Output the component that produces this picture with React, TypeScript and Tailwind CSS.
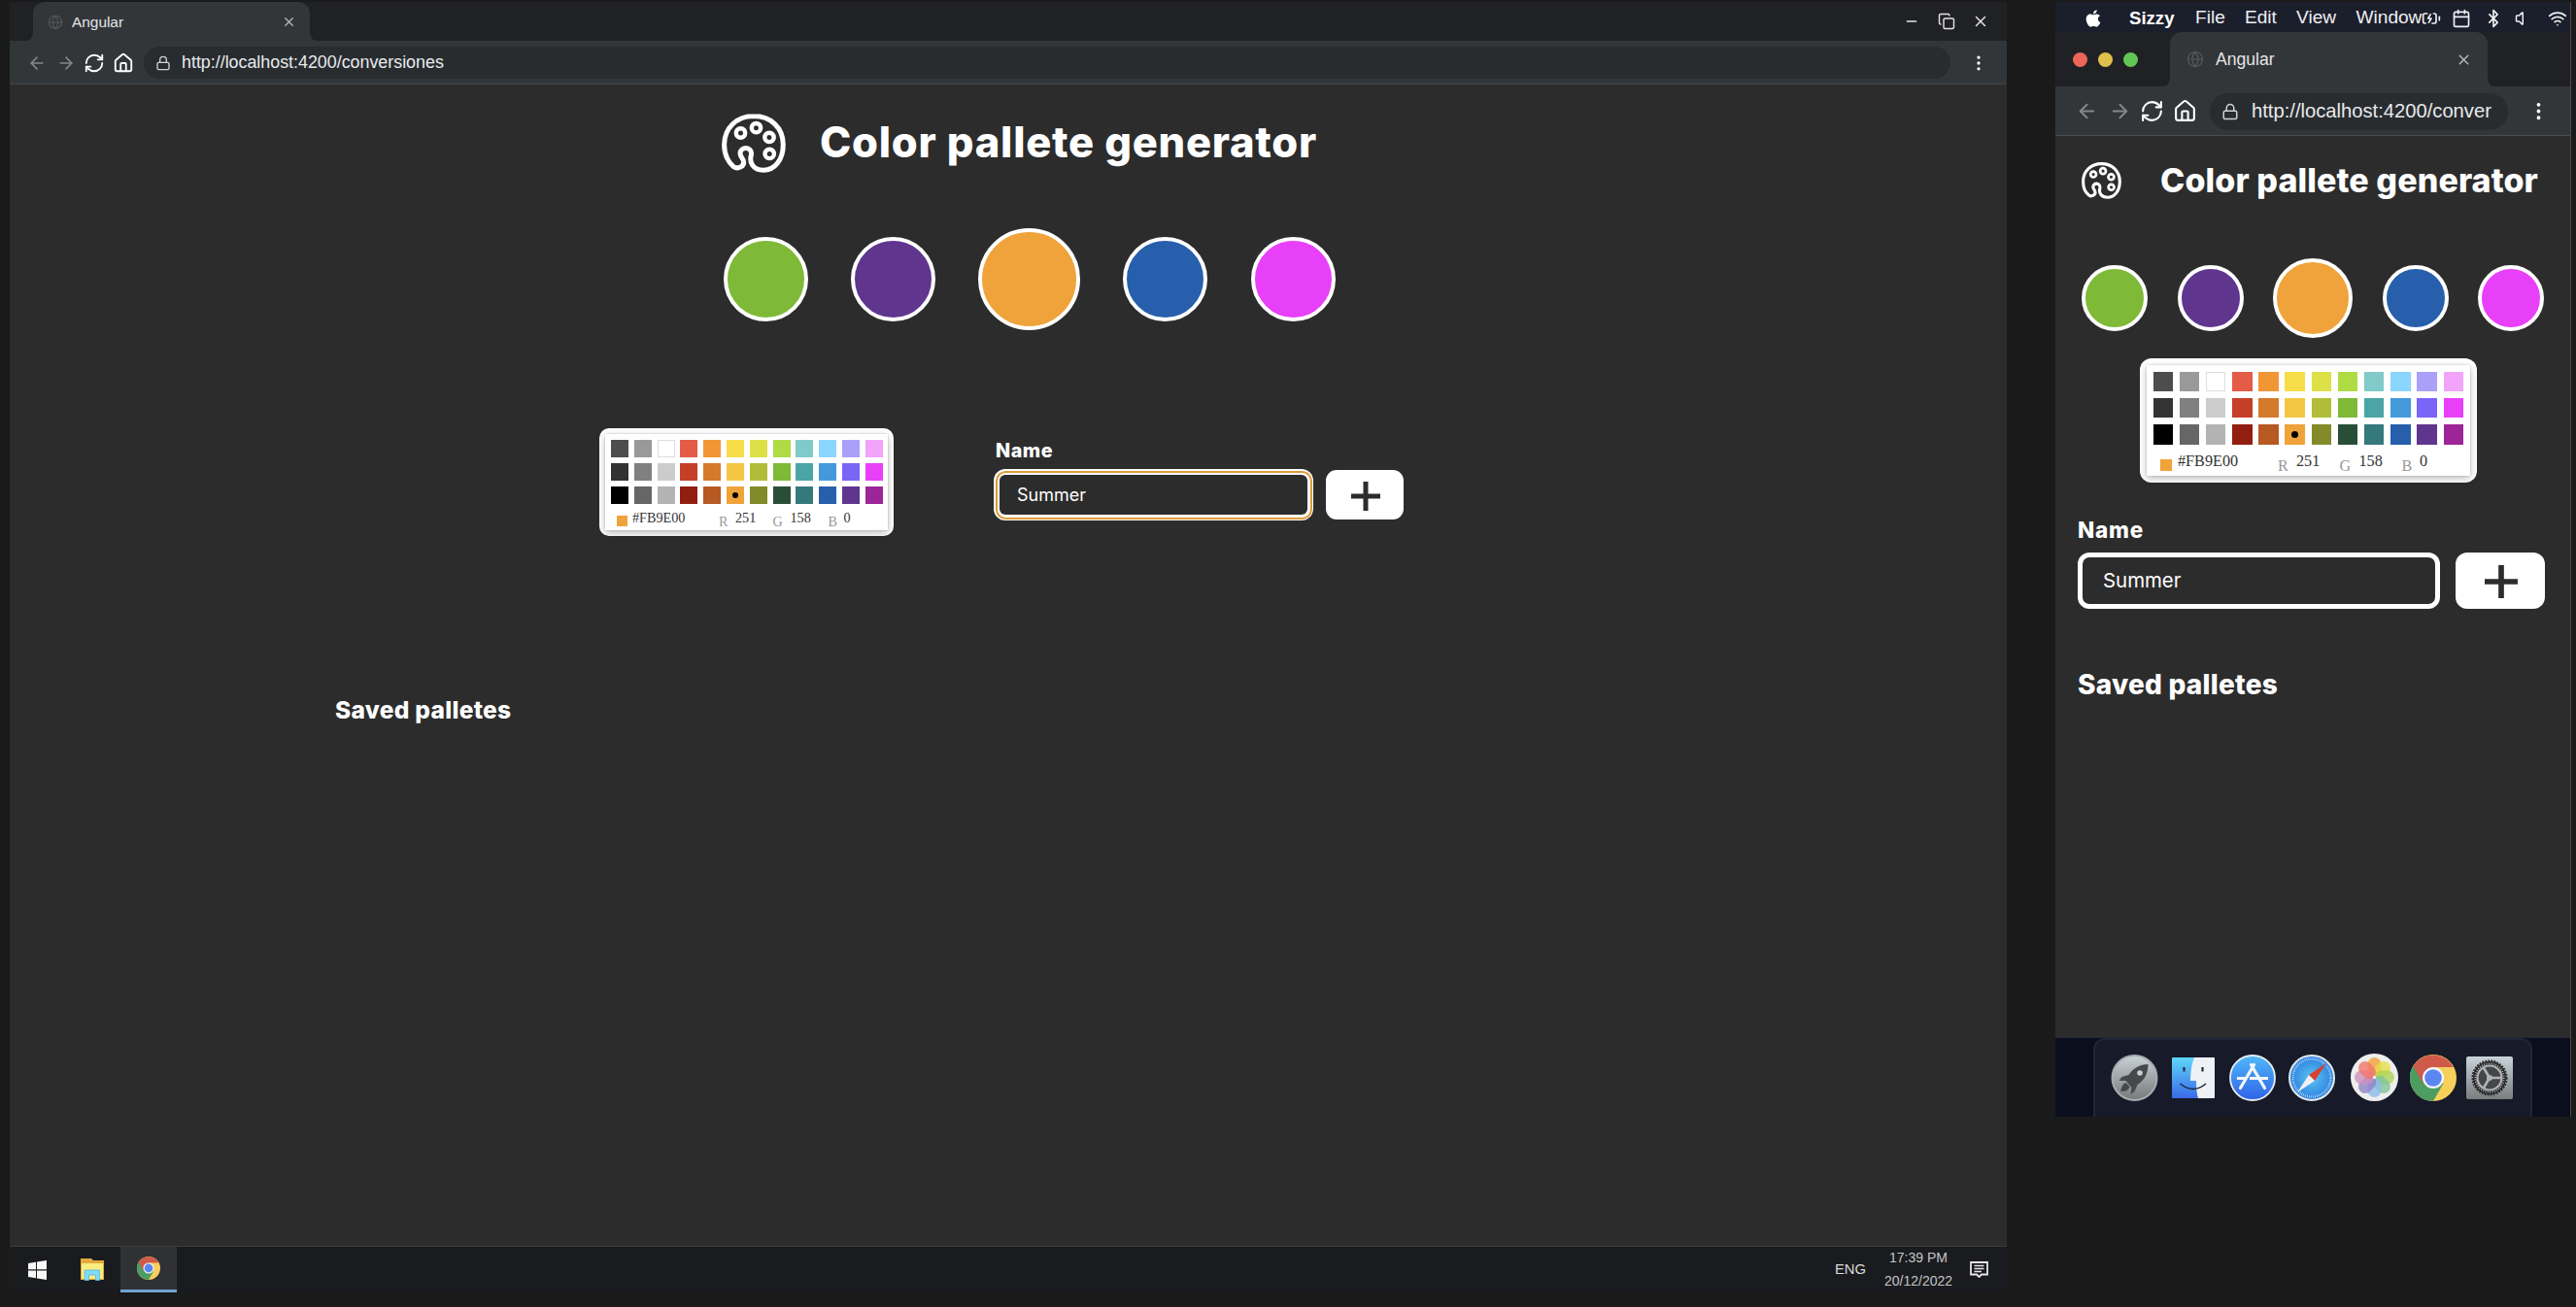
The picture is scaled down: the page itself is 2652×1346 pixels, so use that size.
import React from "react";
import {
  ArrowLeft, ArrowRight, RefreshCw, House, Lock, Globe, X, Minus, Copy,
  EllipsisVertical, Calendar, Bluetooth, Volume, Wifi, BatteryCharging,
} from "lucide-react";
import { FaApple } from "react-icons/fa";

type Mode = "desktop" | "mobile";

const SWATCHES = [
  ["#4d4d4d", "#999999", "#ffffff", "#e45b47", "#f19635", "#f7dd49", "#dde046", "#afdb45", "#80cac9", "#8bd6fe", "#aaa0f9", "#f2a3fa"],
  ["#333333", "#808080", "#cccccc", "#c43f27", "#d47a2b", "#f3c744", "#b1bd39", "#7eba37", "#4ba4a5", "#4499db", "#7965f6", "#e83ff9"],
  ["#000000", "#666666", "#b3b3b3", "#921e12", "#b75923", "#f0a33a", "#828a29", "#294e38", "#35797d", "#275fac", "#5f358e", "#9c2597"],
];

function PaletteIcon({ className }: { className: string }) {
  return (
    <svg className={className} viewBox="0 0 66 61" preserveAspectRatio="none" fill="none" stroke="white">
      <path
        strokeWidth="5"
        strokeLinejoin="round"
        d="M33 2.6C15 2.6 2.6 15 2.6 32C2.6 43 7.500 51 12 54.500C17 58 23.500 54 22.500 49C22 46 19 44.500 19 41C19 37.500 22 35.500 25 35.500C28 35.500 31 38 30.500 42C28 50 32 58.2 43 58.2C55 58.2 63.3 47 63.3 32C63.3 14 50 2.6 33 2.6Z"
      />
      <g strokeWidth="4.4">
        <circle cx="19.500" cy="20" r="4.700" />
        <circle cx="35.500" cy="14.700" r="4.700" />
        <circle cx="49" cy="24.400" r="4.700" />
        <circle cx="49.200" cy="41.400" r="4.700" />
      </g>
    </svg>
  );
}

function ChromeIcon({ className }: { className: string }) {
  return (
    <svg className={className} viewBox="0 0 48 48">
      <circle cx="24" cy="24" r="24" fill="#f7d05c" />
      <path d="M24 24L3.2 12A24 24 0 0 0 24 48L34.4 30Z" fill="#4d9d61" />
      <path d="M24 24L3.2 12A24 24 0 0 1 44.8 13L24 13Z" fill="#cf5a4a" />
      <path d="M3.2 12L13.6 30L24 13Z" fill="#cf5a4a" />
      <path d="M3.2 12A24 24 0 0 0 0 24L13.6 30Z" fill="#4d9d61" />
      <circle cx="24" cy="24" r="11" fill="#f4f6fb" />
      <circle cx="24" cy="24" r="8.8" fill="#5b86ef" />
    </svg>
  );
}

function PlusIcon({ className }: { className: string }) {
  return (
    <svg className={className} viewBox="0 0 30 30">
      <path d="M15 0V30M0 15H30" stroke="#2c2c2c" strokeWidth="5" />
    </svg>
  );
}

function TabCurve({ flip = false }: { flip?: boolean }) {
  return (
    <svg className="h-2.5 w-2 self-end" viewBox="0 0 8 10" preserveAspectRatio="none">
      <path d={flip ? "M0 0Q0 10 8 10H0Z" : "M8 0Q8 10 0 10H8Z"} fill="#323639" />
    </svg>
  );
}

function Picker({ mode }: { mode: Mode }) {
  const d = mode === "desktop";
  return (
    <div className={d ? "h-[111px] w-[303px] rounded-[10px] bg-white p-1.5" : "h-[128px] w-[347px] rounded-xl bg-white p-[7px]"}>
      <div className={d
        ? "h-[99px] w-[291px] bg-white px-1.5 pt-1.5 font-['Liberation_Serif',serif] text-[14.2px] text-[#333] shadow-[0_0_2px_rgba(0,0,0,0.2),0_3px_8px_rgba(0,0,0,0.25)]"
        : "h-[114px] w-[333px] bg-white px-[6.5px] pt-[7px] font-['Liberation_Serif',serif] text-[16.2px] text-[#333] shadow-[0_0_2px_rgba(0,0,0,0.2),0_3px_8px_rgba(0,0,0,0.25)]"}
      >
        {SWATCHES.map((row, r) => (
          <div key={r} className={d ? "mb-[5.8px] flex gap-[5.8px]" : "mb-[6.6px] flex gap-[6.75px]"}>
            {row.map((c) => (
              <div
                key={c}
                className={`flex shrink-0 items-center justify-center ${d ? "size-[18px]" : "size-[20.45px]"} ${c === "#ffffff" ? "border border-[#ddd]" : ""}`}
                style={{ backgroundColor: c }}
              >
                {c === "#f0a33a" && <span className={d ? "size-1.5 rounded-full bg-black" : "size-[7px] rounded-full bg-black"} />}
              </div>
            ))}
          </div>
        ))}
        <div className={d ? "flex h-6 pt-[3px] pl-1.5 leading-5" : "flex h-6 pt-1.5 pl-[7px] leading-5"}>
          <span className={d ? "mt-1 size-[10.5px] bg-[#f0a33a]" : "mt-[3px] size-3 bg-[#f0a33a]"} />
          <span className={d ? "-mt-1 ml-[5.5px] w-[89px]" : "-mt-[5px] ml-[6.5px] w-[103px]"}>#FB9E00</span>
          <span className={d ? "w-[17px] text-[#999]" : "w-[19px] text-[#999]"}>R</span>
          <span className={d ? "-mt-1 w-[38.5px]" : "-mt-[5px] w-[44.5px]"}>251</span>
          <span className={d ? "w-[18px] text-[#999]" : "w-[20px] text-[#999]"}>G</span>
          <span className={d ? "-mt-1 w-[39px]" : "-mt-[5px] w-[44px]"}>158</span>
          <span className={d ? "w-4 text-[#999]" : "w-[18.5px] text-[#999]"}>B</span>
          <span className={d ? "-mt-1" : "-mt-[5px]"}>0</span>
        </div>
      </div>
    </div>
  );
}

function Circles({ mode }: { mode: Mode }) {
  const d = mode === "desktop";
  const small = d ? "size-[87px] border-[4px]" : "size-[68px] border-4";
  const big = d ? "size-[105px] border-[4px]" : "size-[82px] border-4";
  return (
    <div className={d ? "flex w-[629.5px] items-center justify-between" : "flex w-[476px] items-center justify-between"}>
      <div className={`rounded-full border-white bg-[#7eba37] ${small}`} />
      <div className={`rounded-full border-white bg-[#5f358e] ${small}`} />
      <div className={`rounded-full border-white bg-[#f0a33a] ${big}`} />
      <div className={`rounded-full border-white bg-[#275fac] ${small}`} />
      <div className={`rounded-full border-white bg-[#e83ff9] ${small}`} />
    </div>
  );
}

function Desktop() {
  return (
    <div className="mt-0.5 ml-2.5 flex h-[1329px] w-[2056px] flex-col bg-[#2c2c2c]">
      <div className="flex h-10 bg-[#202124]">
        <div className="ml-4 flex">
          <TabCurve />
          <div className="flex h-10 w-[285px] items-center rounded-t-xl bg-[#323639] pt-px pr-3.5 pl-[15px] text-[15.4px] text-[#e4e5e6]">
            <Globe className="size-4 text-[#56595c]" strokeWidth={1.6} />
            <span className="ml-[9px] flex-1">Angular</span>
            <X className="size-[15px] text-[#b6b8ba]" strokeWidth={2} />
          </div>
          <TabCurve flip />
        </div>
        <div className="ml-auto flex items-center text-[#e4e4e4]">
          <Minus className="mr-[19px] size-4" strokeWidth={2} />
          <Copy className="mr-[17px] size-[18px]" strokeWidth={1.9} />
          <X className="mr-[18px] size-[18px]" strokeWidth={2} />
        </div>
      </div>
      <div className="flex h-[45px] items-center border-b border-[#424548] bg-[#323639] pt-px text-white">
        <ArrowLeft className="ml-[18px] size-5 text-[#85888a]" strokeWidth={2} />
        <ArrowRight className="ml-[10px] size-5 text-[#85888a]" strokeWidth={2} />
        <RefreshCw className="ml-[8px] size-[22px]" strokeWidth={2} />
        <House className="ml-2 size-[22px]" strokeWidth={2} />
        <div className="ml-[10px] flex h-[33px] w-[1860px] items-center rounded-full bg-[#282c2f] pl-3 text-[17.85px] text-[#e8eaed]">
          <Lock className="size-4 text-[#cfd1d3]" strokeWidth={2} />
          <span className="ml-[11px]">http://localhost:4200/conversiones</span>
        </div>
        <EllipsisVertical className="ml-[19px] size-5" strokeWidth={2} />
      </div>
      <div className="flex-1 font-['Inter',sans-serif] text-white">
        <div className="ml-[733px] flex h-[91px] items-end">
          <PaletteIcon className="h-[61px] w-[66px]" />
          <h1 className="ml-[35px] h-[62px] text-[43.5px] leading-[60px] font-extrabold tracking-[0.75px] whitespace-nowrap">Color pallete generator</h1>
        </div>
        <div className="mt-[57px] ml-[735px]">
          <Circles mode="desktop" />
        </div>
        <div className="mt-[101px] ml-[607px] flex">
          <Picker mode="desktop" />
          <div className="ml-[103px] pt-[11px]">
            <div className="h-[31px] pl-0.5 text-[19.8px] leading-6 font-extrabold tracking-[0.5px]">Name</div>
            <div className="flex items-center">
              <div className="h-[53px] w-[329px] rounded-xl bg-white p-[1.5px]">
                <div className="h-full rounded-[10.5px] border-2 border-[#dd9a3a] bg-white p-[2.5px]">
                  <div className="flex h-full items-center rounded-md bg-[#2c2c2c] pb-px pl-[18px] text-[18px]">Summer</div>
                </div>
              </div>
              <div className="ml-[13px] flex h-[51px] w-20 items-center justify-center rounded-[11px] bg-white pt-0.5 pl-0.5">
                <PlusIcon className="size-[30px]" />
              </div>
            </div>
          </div>
        </div>
        <h2 className="mt-[164px] ml-[335px] text-[24.5px] leading-[30px] font-extrabold tracking-[0.3px]">Saved palletes</h2>
      </div>
      <div className="flex h-12 border-t border-[#3b3f40] bg-[#1a1b1f] text-[#d9d9d9]">
        <div className="flex w-[114px] items-center">
          <svg className="ml-[19px] h-5 w-[19px]" viewBox="0 0 19 20" fill="#f8f8f8">
            <path d="M0 3L8 1.7V9.3H0ZM9 1.5L19 0V9.3H9ZM0 10.5H8V18.2L0 17ZM9 10.5H19V20L9 18.4Z" />
          </svg>
          <svg className="ml-[35px] h-[23px] w-6" viewBox="0 0 24 23">
            <path d="M0 0H11L13 2H24V22H0Z" fill="#e5a93c" />
            <path d="M1 5H23V21H1Z" fill="#f9ec80" />
            <path d="M4 12H19.5V22.5H15.5V17H8.5V22.5H4Z" fill="#7fdcf8" stroke="#56b8dc" strokeWidth="0.8" />
          </svg>
        </div>
        <div className="flex w-[58px] items-center justify-center border-b-[3px] border-[#72a4cd] bg-[#2f3135]">
          <ChromeIcon className="size-6" />
        </div>
        <div className="ml-auto flex items-center">
          <span className="mr-[18px] text-[14.8px]">ENG</span>
          <div className="w-[72px] text-center text-[14px] leading-6 text-[#c5c5c5]">
            <div className="-mt-0.5 whitespace-nowrap">17:39 PM</div>
            <div className="whitespace-nowrap">20/12/2022</div>
          </div>
          <svg className="mr-[19px] ml-[17px] h-[17px] w-[19px]" viewBox="0 0 19 17" fill="none" stroke="#e5e5e5">
            <path d="M1 1H18V13.5H12L9.5 16L7 13.5H1Z" strokeWidth="1.8" />
            <path d="M4.5 4.5H14.5M4.5 7.5H14.5M4.5 10.5H12" strokeWidth="1.4" />
          </svg>
        </div>
      </div>
    </div>
  );
}

function LaunchpadIcon() {
  return (
    <svg className="h-12 w-[49px]" viewBox="0 0 48 48">
      <defs>
        <linearGradient id="lp" x2="0" y2="1"><stop stopColor="#c8d2d7" /><stop offset="1" stopColor="#77797a" /></linearGradient>
      </defs>
      <circle cx="24" cy="24" r="23" fill="url(#lp)" stroke="#a6abae" strokeWidth="2" />
      <path d="M38 10C29 10 23 14 18 21L11 23L8 27L15 27L21 34L20 41L24 38L27 31C34 27 38 19 38 10Z" fill="#46494b" />
      <path d="M15 29L19 33C18 37 15 38 10 38C10 34 12 30 15 29Z" fill="#46494b" />
      <circle cx="29.5" cy="19" r="2.8" fill="#c9ced1" />
    </svg>
  );
}

function FinderIcon() {
  return (
    <svg className="h-[42px] w-[44px]" viewBox="0 0 44 42">
      <defs>
        <linearGradient id="fi" x2="0" y2="1"><stop stopColor="#5fd6fa" /><stop offset="1" stopColor="#3a6ae8" /></linearGradient>
      </defs>
      <rect width="44" height="42" rx="1" fill="url(#fi)" />
      <path d="M23 0H43Q44 0 44 1V41Q44 42 43 42H27Q25 36 25 24H19Q19 10 23 0Z" fill="#eef1f6" />
      <path d="M12.5 10V14.5M31.5 10V14.5" stroke="#1e2b3e" strokeWidth="2.2" />
      <path d="M8.5 27Q22 38 35 27" fill="none" stroke="#1e2b3e" strokeWidth="1.6" />
    </svg>
  );
}

function AppStoreIcon() {
  return (
    <svg className="size-12" viewBox="0 0 48 48">
      <defs>
        <linearGradient id="as" x2="0" y2="1"><stop stopColor="#4fb9f8" /><stop offset="1" stopColor="#2f62e8" /></linearGradient>
      </defs>
      <circle cx="24" cy="24" r="23" fill="url(#as)" stroke="#e8edf2" strokeWidth="1.8" />
      <g stroke="#f3f6fb" strokeWidth="3.2" strokeLinecap="round">
        <path d="M22.500 10.500L36.500 34.500M25.500 10.500L11.500 34.500" />
        <path d="M8 24.500H16M21 24.500H40" strokeLinecap="butt" />
      </g>
    </svg>
  );
}

function SafariIcon() {
  return (
    <svg className="size-12" viewBox="0 0 48 48">
      <defs>
        <radialGradient id="sf"><stop stopColor="#5cc4f2" /><stop offset="1" stopColor="#2c7fe0" /></radialGradient>
      </defs>
      <circle cx="24" cy="24" r="23" fill="url(#sf)" stroke="#e3e8ec" strokeWidth="2" />
      <circle cx="24" cy="24" r="19.5" fill="none" stroke="#cfe8fa" strokeWidth="2.5" strokeDasharray="0.7 1.342" />
      <path d="M39 9L21 21L27 27Z" fill="#d8402f" />
      <path d="M9 39L21 21L27 27Z" fill="#f1f1f1" />
    </svg>
  );
}

const PETALS = ["#f5a13a", "#e6de4a", "#add35a", "#7fc49a", "#8bbcea", "#8f83c8", "#cf90c0", "#f0776a"];

function PhotosIcon() {
  return (
    <svg className="h-[49px] w-[49px]" viewBox="0 0 48 48">
      <circle cx="24" cy="24" r="24" fill="#eeeeec" />
      {PETALS.map((c, i) => (
        <rect key={c} x="17.2" y="4" width="13.6" height="19.5" rx="6.8" fill={c} opacity="0.8" transform={`rotate(${i * 45} 24 24)`} />
      ))}
      <circle cx="24" cy="24" r="1.6" fill="#fff" opacity="0.8" />
    </svg>
  );
}

function SettingsIcon() {
  return (
    <svg className="h-[44px] w-[48px]" viewBox="0 0 48 44" preserveAspectRatio="none">
      <defs>
        <linearGradient id="st" x2="0" y2="1"><stop stopColor="#c8d4da" /><stop offset="1" stopColor="#7b7d7e" /></linearGradient>
      </defs>
      <rect width="48" height="44" rx="2" fill="url(#st)" />
      <circle cx="24" cy="22" r="17" fill="#29292a" stroke="#29292a" strokeWidth="3" strokeDasharray="1.8 1.2" />
      <circle cx="24" cy="22" r="12.500" fill="#454647" stroke="#b1b3b4" strokeWidth="2.2" />
      <circle cx="24" cy="22" r="14.600" fill="none" stroke="#b1b3b4" strokeWidth="2" strokeDasharray="1 1.4" />
      <path d="M24 22H37M24 22L17.5 11M24 22L17.5 33" stroke="#b1b3b4" strokeWidth="2.600" />
      <circle cx="24" cy="22" r="3" fill="#b1b3b4" />
    </svg>
  );
}

function Mobile() {
  return (
    <div className="mt-0.5 ml-[50px] flex h-[1148px] w-[531px] shrink-0 flex-col border-r border-[#4a4a4a] bg-[#2c2c2c]">
      <div className="flex h-[31px] items-center bg-[#1b1e2b] pt-0.5 text-[19.1px] whitespace-nowrap text-[#eeeff1]">
        <FaApple className="mr-[27px] ml-[29px] size-5 shrink-0 text-white" />
        <span className="w-[68px] shrink-0 text-[18.6px] font-bold text-white">Sizzy</span>
        <span className="w-[51px] shrink-0">File</span>
        <span className="w-[53px] shrink-0">Edit</span>
        <span className="w-[61.5px] shrink-0">View</span>
        <span className="w-[67.5px] shrink-0">Window</span>
        <BatteryCharging className="size-5 shrink-0" strokeWidth={2} />
        <Calendar className="ml-[11px] size-5 shrink-0" strokeWidth={2} />
        <Bluetooth className="ml-[13px] size-5 shrink-0" strokeWidth={2} />
        <Volume className="ml-[12px] size-[18px] shrink-0" strokeWidth={2} />
        <Wifi className="ml-[16px] size-5 shrink-0" strokeWidth={2} />
      </div>
      <div className="flex h-14 bg-[#202124]">
        <div className="flex w-[110px] items-center gap-[11px] pl-[17.5px]">
          <span className="size-[15px] rounded-full bg-[#ec6559]" />
          <span className="size-[15px] rounded-full bg-[#e0bf4b]" />
          <span className="size-[15px] rounded-full bg-[#62c655]" />
        </div>
        <TabCurve />
        <div className="flex h-14 w-[327px] items-center rounded-t-xl bg-[#323639] pr-4 pl-[17px] text-[17.6px] text-[#e4e5e6]">
          <Globe className="size-[18px] text-[#56595c]" strokeWidth={1.6} />
          <span className="ml-3 flex-1">Angular</span>
          <X className="size-[17px] text-[#b6b8ba]" strokeWidth={2} />
        </div>
        <TabCurve flip />
      </div>
      <div className="flex h-[51px] items-center border-b border-[#4a4d50] bg-[#323639] pt-px text-white">
        <ArrowLeft className="ml-[21px] size-[23px] text-[#85888a]" strokeWidth={2} />
        <ArrowRight className="ml-[11px] size-[23px] text-[#85888a]" strokeWidth={2} />
        <RefreshCw className="ml-[9px] size-[25px]" strokeWidth={2} />
        <House className="ml-[9px] size-[25px]" strokeWidth={2} />
        <div className="ml-[13px] flex h-[38px] w-[307px] items-center rounded-full bg-[#282c2f] pl-3 text-[20.2px] text-[#e8eaed]">
          <Lock className="size-[18px] shrink-0 text-[#cfd1d3]" strokeWidth={2} />
          <span className="ml-[13px] whitespace-nowrap">http://localhost:4200/conver</span>
        </div>
        <EllipsisVertical className="ml-[20px] size-[23px] shrink-0" strokeWidth={2} />
      </div>
      <div className="flex-1 font-['Inter',sans-serif] text-white">
        <div className="ml-[27px] flex h-[65px] items-end">
          <PaletteIcon className="h-[38px] w-[41px]" />
          <h1 className="ml-[40px] h-[40px] text-[34px] leading-[42px] font-extrabold tracking-[0.1px] whitespace-nowrap">Color pallete generator</h1>
        </div>
        <div className="mt-[61px] ml-[27px]">
          <Circles mode="mobile" />
        </div>
        <div className="mt-[21px] ml-[87px]">
          <Picker mode="mobile" />
        </div>
        <div className="ml-[23px] pt-[34px]">
          <div className="h-[38px] text-[22.5px] leading-[30px] font-extrabold tracking-[0.8px]">Name</div>
          <div className="flex items-center">
            <div className="flex h-[58px] w-[372.5px] items-center rounded-xl border-[5.5px] border-white pl-[21px] text-[20.4px]">Summer</div>
            <div className="ml-4 flex h-[58px] w-[92px] items-center justify-center rounded-xl bg-white pt-0.5 pl-0.5">
              <PlusIcon className="size-[34px]" />
            </div>
          </div>
        </div>
        <h2 className="mt-[59px] ml-[23px] text-[28px] leading-[38px] font-extrabold tracking-[0.25px]">Saved palletes</h2>
      </div>
      <div className="flex h-[82px] border-t border-[#262a36] bg-[#0b0e1d] pl-[39px]">
        <div className="flex w-[452px] items-center rounded-t-xl border-2 border-b-0 border-[#232635] bg-[#171a29] pb-0.5 pl-4">
          <LaunchpadIcon />
          <span className="w-[14px]" />
          <FinderIcon />
          <span className="w-[15px]" />
          <AppStoreIcon />
          <span className="w-[13px]" />
          <SafariIcon />
          <span className="w-4" />
          <PhotosIcon />
          <span className="w-3" />
          <ChromeIcon className="size-12" />
          <span className="w-2.5" />
          <SettingsIcon />
        </div>
      </div>
    </div>
  );
}

export default function App() {
  return (
    <div className="flex h-[1346px] w-[2652px] items-start overflow-hidden bg-[#1a1a1a] font-['Liberation_Sans',sans-serif]">
      <Desktop />
      <Mobile />
    </div>
  );
}
